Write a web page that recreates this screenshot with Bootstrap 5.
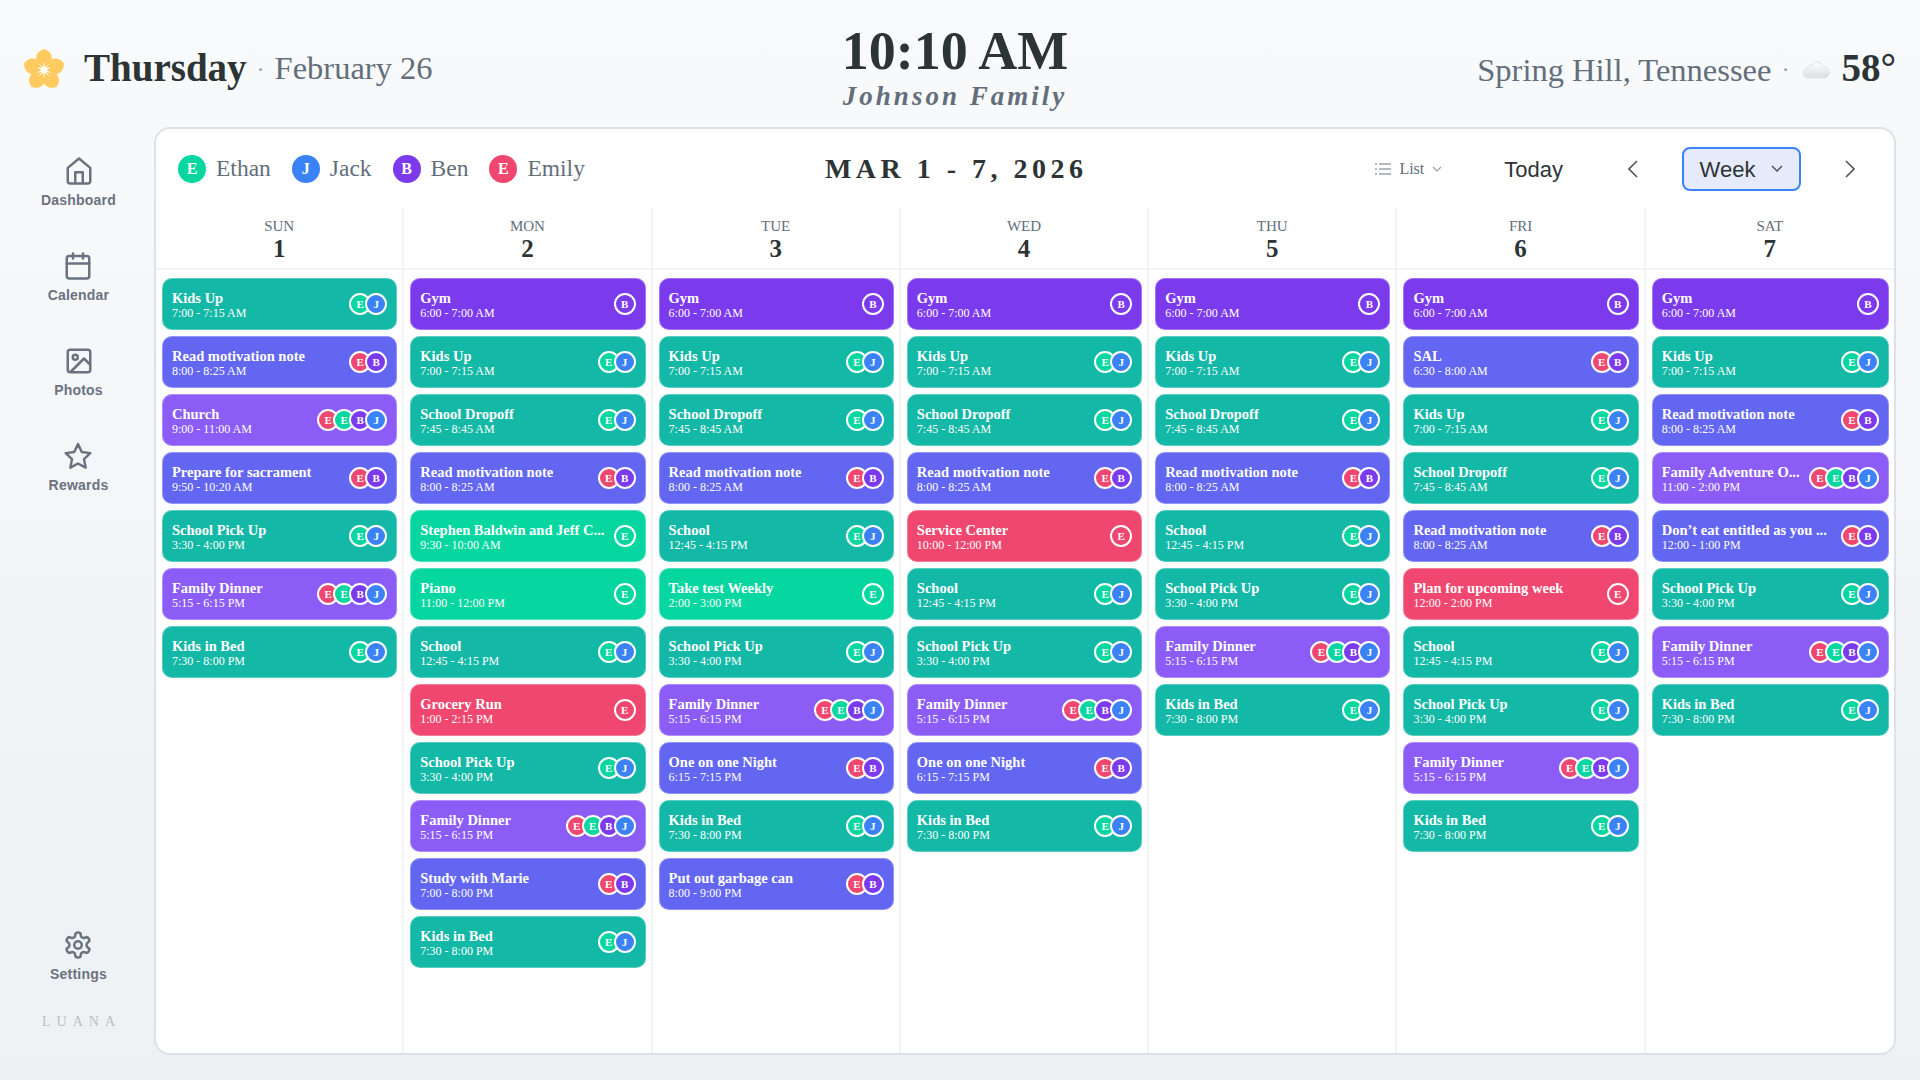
<!DOCTYPE html>
<html lang="en">
<head>
  <meta charset="UTF-8" />
  <meta name="viewport" content="width=device-width, initial-scale=1" />
  <title>Family Calendar</title>
  <link href="https://cdn.jsdelivr.net/npm/bootstrap@5.3.3/dist/css/bootstrap.min.css" rel="stylesheet" />
  <style>
    body {
      height: 100vh;
      overflow: hidden;
      background: linear-gradient(180deg, #f9fafb, #edf1f4);
      font-family: "Liberation Serif", serif;
      color: #2d3436;
    }

    .top-bar {
      height: 127px;
      display: grid;
      grid-template-columns: 1fr auto 1fr;
      padding: 0 24px 0 24px;
    }

    .top-side { padding-top: 10px; }
    .flower { width: 40px; height: 40px; margin-right: 20px; }
    .day-name { font-size: 39px; font-weight: 700; }
    .dot-sep { color: #8f97a1; font-size: 24px; margin: 0 10px; }
    .day-date { font-size: 32.5px; color: #636e7b; }
    .clock-block { margin-right: 10px; }
    .clock-time { font-size: 54px; font-weight: 700; line-height: 1; margin-top: 24px; }
    .family-name { font-size: 27px; font-weight: 700; font-style: italic; letter-spacing: 3px; color: #636e7b; line-height: 1; margin-top: 5px; }
    .place-name { font-size: 32.5px; color: #636e7b; margin-top: 3px; }
    .temp { font-size: 39px; font-weight: 700; margin-left: 11px; }
    .cloud-icon { width: 28px; height: 20px; margin-left: 3px; }

    .main-area { height: 953px; padding: 0 24px 25px 0; }

    .side-rail { width: 154px; flex-shrink: 0; padding: 29px 0 23px 3px; }
    .rail-item {
      height: 95px;
      font-family: "Liberation Sans", sans-serif;
      font-size: 14px;
      font-weight: 700;
      letter-spacing: .2px;
      color: #6b7280;
      line-height: 1;
    }
    .rail-item svg { width: 30px; height: 30px; margin-bottom: 7px; }
    .rail-end { height: auto; }
    .rail-brand { font-size: 14px; letter-spacing: 6px; color: #b9bec5; margin-top: 30px; margin-right: -6px; }

    .cal-card {
      background: #fff;
      border: 2px solid #dde2e8;
      border-radius: 16px;
      overflow: hidden;
    }

    .cal-toolbar { height: 78px; padding: 2px 0 0 22px; }
    .person { margin-right: 21px; font-size: 23.5px; color: #636e7b; }
    .person-dot {
      width: 28px; height: 28px; border-radius: 50%;
      color: #fff; font-size: 16px; font-weight: 700;
      margin-right: 10px;
    }
    .range-title { margin-left: 219px; font-size: 28px; font-weight: 700; letter-spacing: 4.5px; }
    .tool-right { margin-left: auto; padding-right: 39px; }
    .list-pick { font-size: 16px; color: #636e7b; margin-right: 62px; }
    .today-link { font-family: "Liberation Sans", sans-serif; font-size: 22px; color: #2d3436; margin-right: 65px; }
    .week-btn {
      width: 119px; height: 44px;
      font-family: "Liberation Sans", sans-serif; font-size: 22px; color: #2d3436;
      background: #e6ebfb; border: 2px solid #3b82f6; border-radius: 8px;
      margin: 0 44px 0 44px;
    }
    .week-btn:hover { background: #e6ebfb; }

    .week-grid { display: grid; grid-template-columns: repeat(7, 1fr); height: 846px; }
    .day-col { border-right: 2px solid #f3f4f6; min-width: 0; }
    .day-col:last-child { border-right: 0; }
    .day-head { height: 63px; border-bottom: 2px solid #f3f4f6; padding-top: 12px; line-height: 1; }
    .day-short { font-size: 15px; color: #636e7b; }
    .day-num { font-size: 25px; font-weight: 700; margin-top: 2px; }
    .day-events { padding: 8px 5px 8px 6px; gap: 6px; }

    .cal-event {
      height: 52px;
      border-radius: 10px;
      padding: 0 10px;
      color: #fff;
      outline: 1px solid rgba(255, 255, 255, .3);
      outline-offset: -1px;
    }
    .event-text { padding-top: 2px; }
    .event-title { font-size: 14.5px; font-weight: 700; line-height: 16px; }
    .event-time { font-size: 12px; line-height: 14px; }
    .ev-teal { background: #14b8a6; }
    .ev-violet { background: #7c3aed; }
    .ev-indigo { background: #6366f1; }
    .ev-purple { background: #8b5cf6; }
    .ev-green { background: #06d6a0; }
    .ev-red { background: #ef476f; }

    .face {
      width: 22px; height: 22px; border-radius: 50%;
      border: 2px solid #fff;
      color: #fff; font-size: 11px; font-weight: 700;
      margin-left: -6px;
      flex-shrink: 0;
    }
    .face:first-child { margin-left: 0; }
    .who-e { background: #06d6a0; }
    .who-j { background: #3b82f6; }
    .who-b { background: #7c3aed; }
    .who-r { background: #ef476f; }
  </style>
</head>
<body>

<header class="top-bar">
  <div class="top-side d-flex align-items-center">
    <svg class="flower" viewBox="0 0 40 40">
      <g fill="#ffcb61">
        <path d="M20 20C9 14 10 3 20 0 30 3 31 14 20 20z" />
        <path d="M20 20C9 14 10 3 20 0 30 3 31 14 20 20z" transform="rotate(72 20 21)" />
        <path d="M20 20C9 14 10 3 20 0 30 3 31 14 20 20z" transform="rotate(144 20 21)" />
        <path d="M20 20C9 14 10 3 20 0 30 3 31 14 20 20z" transform="rotate(216 20 21)" />
        <path d="M20 20C9 14 10 3 20 0 30 3 31 14 20 20z" transform="rotate(288 20 21)" />
      </g>
      <circle cx="20" cy="21" r="3.500" fill="#fff" />
      <path stroke="#fff" stroke-width="1" d="M20 14v14M13.500 18.500l13 5M26.500 18.500l-13 5M15.500 15.500l9 11M24.500 15.500l-9 11" />
    </svg>
    <span class="day-name">Thursday</span>
    <span class="dot-sep">·</span>
    <span class="day-date">February 26</span>
  </div>
  <div class="clock-block text-center">
    <div class="clock-time">10:10 AM</div>
    <div class="family-name">Johnson Family</div>
  </div>
  <div class="top-side d-flex align-items-center justify-content-end">
    <span class="place-name">Spring Hill, Tennessee</span>
    <span class="dot-sep">·</span>
    <svg class="cloud-icon" viewBox="0 0 28 20">
      <defs>
        <linearGradient id="cloudFill" x1="0" y1="0" x2="0" y2="1">
          <stop offset="0" stop-color="#fff" />
          <stop offset="1" stop-color="#d9dee3" />
        </linearGradient>
      </defs>
      <path fill="url(#cloudFill)" stroke="#dfe3e7" stroke-width="1" d="M6 19a4.800 4.800 0 0 1-1.300-9.400A4.500 4.500 0 0 1 10 6 6 6 0 0 1 21 7.500 5.800 5.800 0 0 1 22.500 19z" />
    </svg>
    <span class="temp">58°</span>
  </div>
</header>

<div class="main-area d-flex">
  <nav class="side-rail d-flex flex-column align-items-center">
    <div class="rail-item d-flex flex-column align-items-center">
      <svg viewBox="0 0 24 24" fill="none" stroke="#6b7280" stroke-width="2" stroke-linejoin="round"><path d="M3 9.500 12 2l9 7.500V20a2 2 0 0 1-2 2H5a2 2 0 0 1-2-2z" /><path d="M9 22v-9h6v9" /></svg>
      Dashboard
    </div>
    <div class="rail-item d-flex flex-column align-items-center">
      <svg viewBox="0 0 24 24" fill="none" stroke="#6b7280" stroke-width="2" stroke-linecap="round"><rect x="3" y="4" width="18" height="18" rx="2" /><path d="M3 10h18M8 2v4M16 2v4" /></svg>
      Calendar
    </div>
    <div class="rail-item d-flex flex-column align-items-center">
      <svg viewBox="0 0 24 24" fill="none" stroke="#6b7280" stroke-width="2" stroke-linejoin="round"><rect x="3" y="3" width="18" height="18" rx="2" /><circle cx="9" cy="9" r="2" /><path d="M21 15l-5-5L5 21" /></svg>
      Photos
    </div>
    <div class="rail-item d-flex flex-column align-items-center">
      <svg viewBox="0 0 24 24" fill="none" stroke="#6b7280" stroke-width="2" stroke-linejoin="round"><path d="M12 2.500l3 6.300 6.800.9-5 4.800 1.300 6.800-6.100-3.300-6.100 3.300 1.300-6.800-5-4.800 6.800-.9z" /></svg>
      Rewards
    </div>
    <div class="rail-item rail-end d-flex flex-column align-items-center mt-auto">
      <svg viewBox="0 0 24 24" fill="none" stroke="#6b7280" stroke-width="2" stroke-linejoin="round"><circle cx="12" cy="12" r="3" /><path d="M12.220 2h-.44a2 2 0 0 0-2 2v.18a2 2 0 0 1-1 1.730l-.43.25a2 2 0 0 1-2 0l-.15-.08a2 2 0 0 0-2.730.73l-.22.38a2 2 0 0 0 .73 2.730l.15.1a2 2 0 0 1 1 1.720v.51a2 2 0 0 1-1 1.740l-.15.09a2 2 0 0 0-.73 2.730l.22.38a2 2 0 0 0 2.730.73l.15-.08a2 2 0 0 1 2 0l.43.25a2 2 0 0 1 1 1.730V20a2 2 0 0 0 2 2h.44a2 2 0 0 0 2-2v-.18a2 2 0 0 1 1-1.730l.43-.25a2 2 0 0 1 2 0l.15.08a2 2 0 0 0 2.730-.73l.22-.39a2 2 0 0 0-.73-2.730l-.15-.08a2 2 0 0 1-1-1.740v-.5a2 2 0 0 1 1-1.740l.15-.09a2 2 0 0 0 .73-2.730l-.22-.38a2 2 0 0 0-2.730-.73l-.15.08a2 2 0 0 1-2 0l-.43-.25a2 2 0 0 1-1-1.730V4a2 2 0 0 0-2-2z" /></svg>
      Settings
    </div>
    <div class="rail-brand">LUANA</div>
  </nav>

  <main class="cal-card flex-grow-1">
    <div class="cal-toolbar d-flex align-items-center">
      <div class="person d-flex align-items-center"><span class="person-dot who-e d-flex align-items-center justify-content-center">E</span>Ethan</div>
      <div class="person d-flex align-items-center"><span class="person-dot who-j d-flex align-items-center justify-content-center">J</span>Jack</div>
      <div class="person d-flex align-items-center"><span class="person-dot who-b d-flex align-items-center justify-content-center">B</span>Ben</div>
      <div class="person d-flex align-items-center"><span class="person-dot who-r d-flex align-items-center justify-content-center">E</span>Emily</div>
      <div class="range-title">MAR 1 - 7, 2026</div>
      <div class="tool-right d-flex align-items-center">
        <div class="list-pick d-flex align-items-center gap-2">
          <svg width="16" height="14" viewBox="0 0 16 14" fill="none" stroke="#6b7280" stroke-width="1.200"><path d="M4 2h12M4 7h12M4 12h12M0 2h2M0 7h2M0 12h2" /></svg>
          List
          <svg width="10" height="6" viewBox="0 0 10 6" fill="none" stroke="#9aa1aa" stroke-width="1.200"><path d="M1 1l4 4 4-4" /></svg>
        </div>
        <div class="today-link">Today</div>
        <svg width="10" height="18" viewBox="0 0 10 18" fill="none" stroke="#4b5563" stroke-width="1.600"><path d="M9 1 1 9l8 8" /></svg>
        <button class="btn week-btn d-flex align-items-center justify-content-center gap-3 p-0">Week
          <svg width="12" height="8" viewBox="0 0 12 8" fill="none" stroke="#4b5563" stroke-width="1.500"><path d="M1 1l5 5 5-5" /></svg>
        </button>
        <svg width="10" height="18" viewBox="0 0 10 18" fill="none" stroke="#4b5563" stroke-width="1.600"><path d="M1 1l8 8-8 8" /></svg>
      </div>
    </div>
    <div class="week-grid" id="weekGrid"></div>
  </main>
</div>

<script src="https://cdn.jsdelivr.net/npm/bootstrap@5.3.3/dist/js/bootstrap.bundle.min.js"></script>
<script>
  const kidsUp = ["Kids Up", "7:00 - 7:15 AM", "teal", "ej"];
  const gym = ["Gym", "6:00 - 7:00 AM", "violet", "b"];
  const dropoff = ["School Dropoff", "7:45 - 8:45 AM", "teal", "ej"];
  const motivation = ["Read motivation note", "8:00 - 8:25 AM", "indigo", "rb"];
  const school = ["School", "12:45 - 4:15 PM", "teal", "ej"];
  const pickUp = ["School Pick Up", "3:30 - 4:00 PM", "teal", "ej"];
  const dinner = ["Family Dinner", "5:15 - 6:15 PM", "purple", "rebj"];
  const oneOnOne = ["One on one Night", "6:15 - 7:15 PM", "indigo", "rb"];
  const bed = ["Kids in Bed", "7:30 - 8:00 PM", "teal", "ej"];

  const days = [
    ["SUN", 1, [kidsUp, motivation, ["Church", "9:00 - 11:00 AM", "purple", "rebj"], ["Prepare for sacrament", "9:50 - 10:20 AM", "indigo", "rb"], pickUp, dinner, bed]],
    ["MON", 2, [gym, kidsUp, dropoff, motivation, ["Stephen Baldwin and Jeff C...", "9:30 - 10:00 AM", "green", "e"], ["Piano", "11:00 - 12:00 PM", "green", "e"], school, ["Grocery Run", "1:00 - 2:15 PM", "red", "r"], pickUp, dinner, ["Study with Marie", "7:00 - 8:00 PM", "indigo", "rb"], bed]],
    ["TUE", 3, [gym, kidsUp, dropoff, motivation, school, ["Take test Weekly", "2:00 - 3:00 PM", "green", "e"], pickUp, dinner, oneOnOne, bed, ["Put out garbage can", "8:00 - 9:00 PM", "indigo", "rb"]]],
    ["WED", 4, [gym, kidsUp, dropoff, motivation, ["Service Center", "10:00 - 12:00 PM", "red", "r"], school, pickUp, dinner, oneOnOne, bed]],
    ["THU", 5, [gym, kidsUp, dropoff, motivation, school, pickUp, dinner, bed]],
    ["FRI", 6, [gym, ["SAL", "6:30 - 8:00 AM", "indigo", "rb"], kidsUp, dropoff, motivation, ["Plan for upcoming week", "12:00 - 2:00 PM", "red", "r"], school, pickUp, dinner, bed]],
    ["SAT", 7, [gym, kidsUp, motivation, ["Family Adventure O...", "11:00 - 2:00 PM", "purple", "rebj"], ["Don’t eat entitled as you ...", "12:00 - 1:00 PM", "indigo", "rb"], pickUp, dinner, bed]]
  ];

  const letters = { e: "E", r: "E", b: "B", j: "J" };

  function faces(who) {
    return [...who].map(w =>
      `<span class="face who-${w} d-flex align-items-center justify-content-center">${letters[w]}</span>`
    ).join("");
  }

  document.getElementById("weekGrid").innerHTML = days.map(([name, num, events]) => `
    <section class="day-col">
      <div class="day-head text-center">
        <div class="day-short">${name}</div>
        <div class="day-num">${num}</div>
      </div>
      <div class="day-events d-flex flex-column">
        ${events.map(([title, time, color, who]) => `
          <div class="cal-event ev-${color} d-flex align-items-center justify-content-between gap-2">
            <div class="event-text text-nowrap">
              <div class="event-title">${title}</div>
              <div class="event-time">${time}</div>
            </div>
            <div class="d-flex">${faces(who)}</div>
          </div>`).join("")}
      </div>
    </section>`).join("");
</script>

</body>
</html>
